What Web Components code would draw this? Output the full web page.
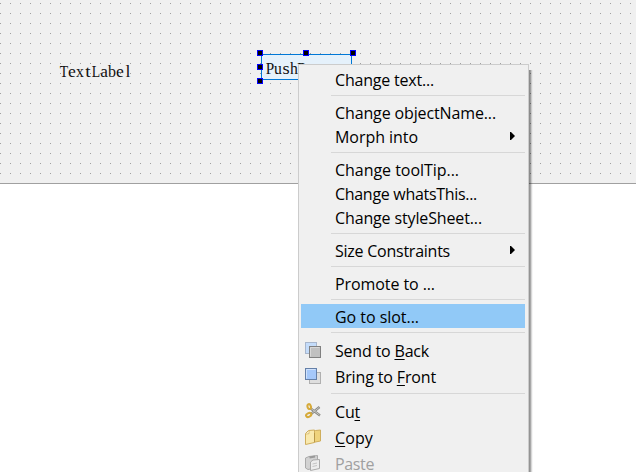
<!DOCTYPE html>
<html lang="en"><head><meta charset="utf-8"><title>Form editor</title>
<style>html,body{margin:0;width:636px;height:472px;overflow:hidden;background:#fff}</style></head>
<body>
<form-canvas>
  <form-label>TextLabel</form-label>
  <form-button>PushB</form-button>
</form-canvas>
<context-menu>
  <menu-item style="--w:99px">Change text...</menu-item>
  <menu-line></menu-line>
  <menu-item style="--w:161px">Change objectName...</menu-item>
  <menu-item sub style="--w:83px">Morph into</menu-item>
  <menu-line></menu-line>
  <menu-item style="--w:124px">Change toolTip...</menu-item>
  <menu-item style="--w:142px">Change whatsThis...</menu-item>
  <menu-item style="--w:147px">Change styleSheet...</menu-item>
  <menu-line></menu-line>
  <menu-item sub style="--w:115px">Size Constraints</menu-item>
  <menu-line></menu-line>
  <menu-item style="--w:100px">Promote to ...</menu-item>
  <menu-line></menu-line>
  <menu-item active style="--w:84px">Go to slot...</menu-item>
  <menu-line></menu-line>
  <menu-item tall icon="back" style="--w:94px">Send to <u>B</u>ack</menu-item>
  <menu-item tall icon="front" style="--w:101px">Bring to <u>F</u>ront</menu-item>
  <menu-line></menu-line>
  <menu-item tall icon="cut" style="--w:25px">Cu<u>t</u></menu-item>
  <menu-item tall icon="copy" style="--w:38px"><u>C</u>opy</menu-item>
  <menu-item tall disabled icon="paste" style="--w:39px"><u>P</u>aste</menu-item>
</context-menu>
<script>
class FormCanvas extends HTMLElement{
  constructor(){super();this.attachShadow({mode:'open'}).innerHTML=`<style>
  :host{display:block;position:relative;box-sizing:border-box;height:184px;border-bottom:1px solid #a0a0a0;background:#f0f0f0}
  svg{position:absolute;inset:0}
  </style><svg width="636" height="183" shape-rendering="crispEdges"><defs><pattern id="g" width="10" height="10" patternUnits="userSpaceOnUse"><rect y="3" width="1" height="1" fill="#a0a0a0"/></pattern></defs><rect width="636" height="183" fill="url(#g)"/></svg><slot></slot>`;}
}
/* Fixed-pitch serif text: each character sits in an 8px cell. */
const stretch={T:.86,L:.86,P:.95,B:.88,u:.98,h:.98,e:1.1,a:1.08,s:1.15,t:1.2,l:1.1,b:1,x:.98};
const cells=t=>[...t].map(c=>`<span style="transform:scaleX(${stretch[c]||1})">${c}</span>`).join('');
const cellCss=`.t{display:flex;font:16px/16px "Liberation Serif",serif;white-space:nowrap;color:#111}.t span{display:flex;justify-content:center;width:8px}`;
class FormLabel extends HTMLElement{
  connectedCallback(){this.attachShadow({mode:'open'}).innerHTML=`<style>:host{position:absolute;left:60px;top:64px}${cellCss}</style><div class="t">${cells(this.textContent)}</div>`;}
}
class FormButton extends HTMLElement{
  connectedCallback(){
    const h=[[0,0],[46,0],[93,0],[0,14],[93,14],[0,28],[46,28],[93,28]].map(p=>`<i style="left:${p[0]-5}px;top:${p[1]-5}px"></i>`).join('');
    this.attachShadow({mode:'open'}).innerHTML=`<style>:host{position:absolute;left:261px;top:54px;width:91px;height:26px;box-sizing:border-box;border:1px solid #0078d7;background:#e5f1fb}
  .t{padding:6px 0 0 4px}${cellCss}
  i{position:absolute;width:4px;height:4px;border:1px solid #00f;background:#000}</style><div class="t">${cells(this.textContent)}</div>${h}`;}
}
class ContextMenu extends HTMLElement{
  constructor(){super();this.attachShadow({mode:'open'}).innerHTML=`<style>
  :host{display:block;position:absolute;left:298px;top:64px;width:231px;height:420px;box-sizing:border-box;border:1px solid #ccc;background:#f0f0f0;padding:2px 3px 2px 2px}
  .s{position:absolute;left:230px;top:5px;width:4px;height:420px;background:linear-gradient(90deg,rgba(0,0,0,.42) 0 1px,rgba(0,0,0,.34) 1px 2px,rgba(0,0,0,.16) 2px 3px,rgba(0,0,0,.04) 3px)}
  </style><slot></slot><div class="s"></div>`;}
}
class MenuLine extends HTMLElement{
  constructor(){super();this.attachShadow({mode:'open'}).innerHTML=`<style>:host{display:block;height:9px;padding:4px 0 0 30px;box-sizing:border-box}div{height:1px;background:#d7d7d7}</style><div></div>`;}
}
const icons={
back:`<rect x=".5" y=".5" width="11" height="11" fill="#c4dcfa" stroke="#a8b6cc"/><rect x="4.500" y="4.500" width="11" height="11" fill="#c0c0c0" stroke="#808080"/><path d="M5.500 14.500V5.500H14.500" fill="none" stroke="#d8d8d8"/>`,
front:`<rect x="4.500" y="4.500" width="11" height="11" fill="#dedede" stroke="#b0b0b0"/><rect x=".5" y=".5" width="11" height="11" fill="#a5c8fa" stroke="#6580a8"/><path d="M1.500 10.500V1.500H10.500" fill="none" stroke="#d0e2fc"/>`,
cut:`<path d="M5 5L15 12.500M6 11L14.500 4" stroke="#8b8b86" stroke-width="2.400"/><path d="M6 5.500L14.500 12M6.500 10.500L14 4.500" stroke="#d2d2ce" stroke-width=".8"/><ellipse cx="4.200" cy="3.600" rx="1.700" ry="2.500" transform="rotate(-15 4.200 3.600)" stroke="#d6aa3a" stroke-width="2.100"/><ellipse cx="3.700" cy="12" rx="2.700" ry="1.800" transform="rotate(-25 3.700 12)" stroke="#d6aa3a" stroke-width="2.100"/>`,
copy:`<path d="M8 3L10.500 1.500L15.500 1V12L8 13.500Z" fill="#efd37c" stroke="#cfae5c"/><path d="M.5 4.500L3.500 1.500L9.500 1V13.500L.5 15.500Z" fill="#f9e9ae" stroke="#cfae5c"/><path d="M1 5L4 4.700L4 2" fill="#fff8dc" stroke="#cfae5c" stroke-width=".7"/><path d="M9.500 4V13" stroke="#b89748"/>`,
paste:`<path d="M.5 3L4 1.500L12.500 .5V12.500L3 14.500L.5 13Z" fill="#d2d2d2" stroke="#aaa"/><path d="M4.500 2.500L10 1.500" stroke="#999" stroke-width="2"/><path d="M5.500 7L8 5L14.500 4.500V13.500L5.500 15.500Z" fill="#ededed" stroke="#aaa"/><path d="M7.500 9L12 8M7.500 11.500L12 10.500" stroke="#c4c4c4"/>`};
class MenuItem extends HTMLElement{
  connectedCallback(){const ic=this.getAttribute('icon');
    this.attachShadow({mode:'open'}).innerHTML=`<style>
  :host{display:grid;grid-template-columns:34px 1fr 15px;align-items:center;height:24px;color:#000;font:16px/24px "Open Sans","Noto Sans",sans-serif;white-space:nowrap}
  :host([tall]){height:26px}:host([active]){background:#91c9f7}:host([disabled]){color:#a0a0a0}
  svg{display:block}.i{padding-left:4px}b{font-weight:400;justify-self:start;padding-top:2px;line-height:22px}
  ::slotted(u){text-underline-offset:2px;text-decoration-thickness:1px}
  </style><span class="i">${ic?`<svg width="16" height="16" fill="none">${icons[ic]}</svg>`:''}</span><b><slot></slot></b>${this.hasAttribute('sub')?'<svg width="5" height="8"><path d="M0 0H1L5 4L1 8H0Z"/></svg>':''}`;
    /* Tracks each caption to its measured width. */
    const b=this.shadowRoot.querySelector('b'),w=parseFloat(this.style.getPropertyValue('--w'));
    b.style.letterSpacing=(w-b.getBoundingClientRect().width)/this.textContent.length+'px';}
}
customElements.define('form-canvas',FormCanvas);customElements.define('form-label',FormLabel);customElements.define('form-button',FormButton);
customElements.define('context-menu',ContextMenu);customElements.define('menu-line',MenuLine);customElements.define('menu-item',MenuItem);
</script></body></html>
